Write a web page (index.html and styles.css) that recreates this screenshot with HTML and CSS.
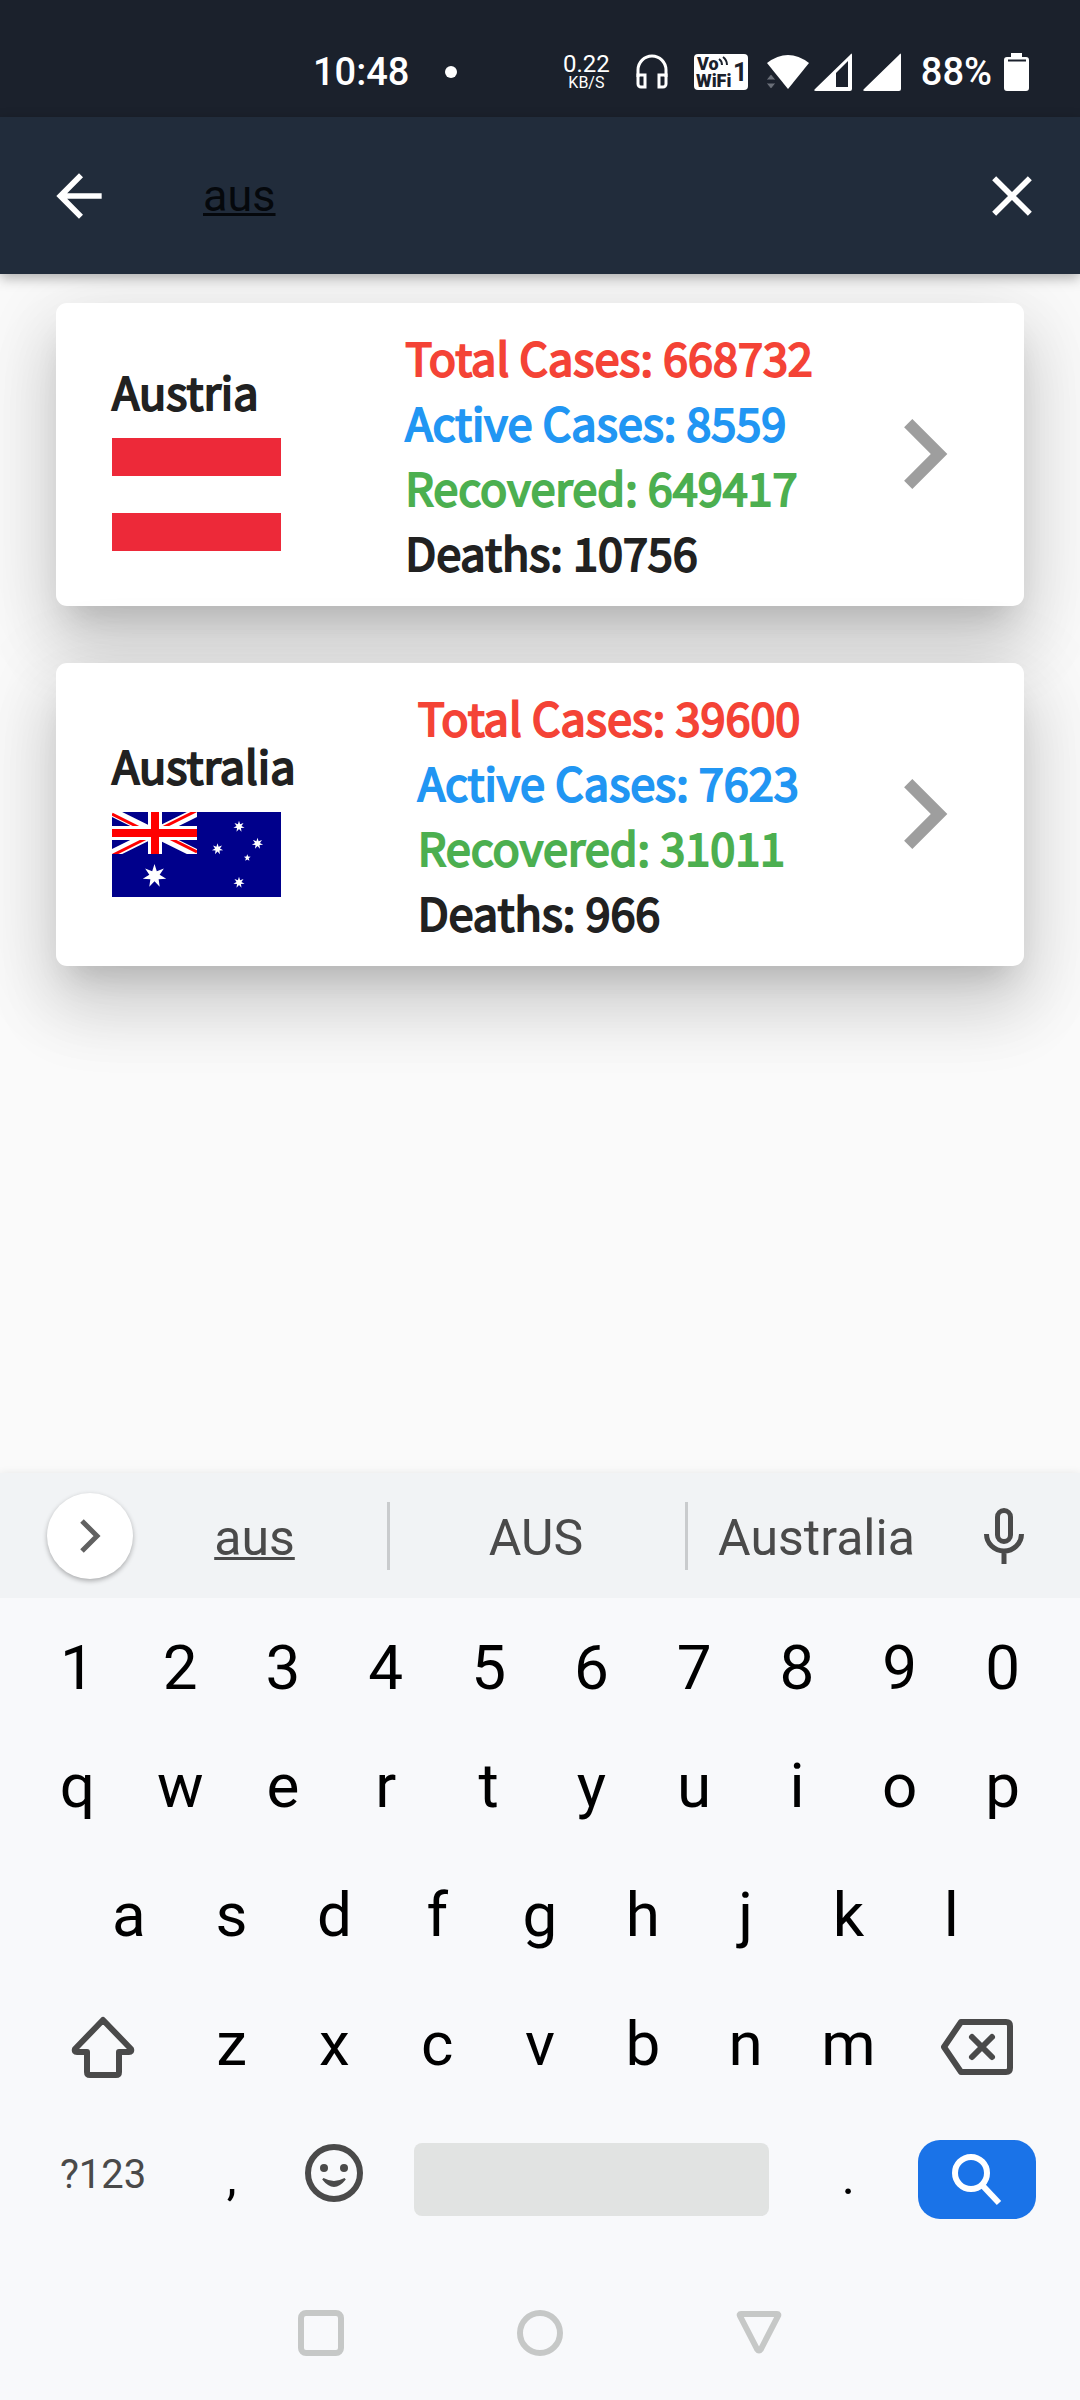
FILE: index.html
```html
<!DOCTYPE html>
<html lang="en">
<head>
<meta charset="utf-8">
<meta name="viewport" content="width=device-width, initial-scale=1">
<title>Country search</title>
<link rel="stylesheet" href="styles.css">
</head>
<body>
<div class="screen">
  <div class="status-bar">
    <div class="status-left">
      <span class="clock">10:48</span>
      <span class="notice-dot"></span>
    </div>
    <div class="status-right">
      <div class="net-speed"><span class="net-value">0.22</span><span class="net-unit">KB/S</span></div>
      <svg class="icon-headphones" viewBox="0 0 32 36" width="32" height="36" fill="none" stroke="#fff" stroke-width="3">
        <path d="M2 23V16a14 14 0 0 1 28 0v7"/>
        <path d="M2 21h7v12H5a3 3 0 0 1-3-3zM30 21h-7v12h4a3 3 0 0 0 3-3z"/>
      </svg>
      <svg class="icon-vowifi" viewBox="0 0 54 36" width="54" height="36">
        <rect width="54" height="36" rx="4" fill="#fff"/>
        <g fill="#1b212c" font-family="Roboto, sans-serif" font-weight="900">
          <text x="3" y="16" font-size="18">Vo</text>
          <text x="2" y="33" font-size="18">WiFi</text>
          <text x="39" y="27" font-size="25" font-weight="700">1</text>
        </g>
        <path d="M25 5q3 2 3 6M29 3q4 3 4 8" fill="none" stroke="#1b212c" stroke-width="2"/>
      </svg>
      <svg class="icon-radio" viewBox="0 0 134 38" width="134" height="38">
        <path d="M0 10Q21-6 42 10L21 36z" fill="#fff"/>
        <path d="M-1 27l5-6 5 6zM-1 30h10l-5 6z" fill="#6a6f78" stroke="#1b212c" stroke-width="1"/>
        <path d="M83 2Q85-1 85 2V36q0 2-2 2H49q-3 0-1-2z" fill="#fff"/>
        <path d="M81 8V34H69V20z" fill="#1b212c"/>
        <path d="M132 2Q134-1 134 2V36q0 2-2 2H98q-3 0-1-2z" fill="#fff"/>
      </svg>
      <span class="battery-level">88%</span>
      <svg class="icon-battery" viewBox="0 0 25 38" width="25" height="38">
        <path d="M7 0h11v4h4a3 3 0 0 1 3 3v28a3 3 0 0 1-3 3H3a3 3 0 0 1-3-3V7a3 3 0 0 1 3-3h4z" fill="#fff"/>
        <path d="M4 7.500h18" stroke="#1b212c" stroke-width="2"/>
      </svg>
    </div>
  </div>

  <header class="app-bar">
    <button class="icon-button" type="button" aria-label="Back">
      <svg viewBox="0 0 24 24" width="68" height="68" fill="#fff"><path d="M20 11H7.830l5.590-5.590L12 4l-8 8 8 8 1.410-1.410L7.830 13H20v-2z"/></svg>
    </button>
    <input class="search-input" type="text" value="aus" aria-label="Search country">
    <button class="icon-button" type="button" aria-label="Clear">
      <svg viewBox="0 0 24 24" width="68" height="68" fill="#fff"><path d="M19 6.410L17.590 5 12 10.590 6.410 5 5 6.410 10.590 12 5 17.590 6.410 19 12 13.410 17.590 19 19 17.590 13.410 12z"/></svg>
    </button>
  </header>

  <main class="results">
    <article class="card">
      <div class="country">
        <h2 class="country-name">Austria</h2>
        <svg class="flag" viewBox="0 0 169 113" width="169" height="113"><path d="M0 0h169v38H0zM0 75h169v38H0z" fill="#ed2939"/></svg>
      </div>
      <div class="stats">
        <p class="stat total">Total Cases: 668732</p>
        <p class="stat active">Active Cases: 8559</p>
        <p class="stat recovered">Recovered: 649417</p>
        <p class="stat">Deaths: 10756</p>
      </div>
      <button class="icon-button" type="button" aria-label="Open Austria">
        <svg viewBox="0 0 24 24" width="140" height="140" fill="#9e9e9e"><path d="M10 6L8.590 7.410 13.170 12l-4.580 4.590L10 18l6-6z"/></svg>
      </button>
    </article>

    <article class="card">
      <div class="country">
        <h2 class="country-name">Australia</h2>
        <svg class="flag" viewBox="0 0 169 85" width="169" height="85">
          <defs>
            <path id="star" d="M0-12L2.300-4.780 9.380-7.480 5.170-1.180 11.700 2.670 4.140 3.300 5.210 10.810 0 5.300-5.210 10.810-4.140 3.300-11.700 2.670-5.170-1.180-9.380-7.480-2.300-4.780z"/>
            <clipPath id="canton"><path d="M0 0h85v42H0z"/></clipPath>
          </defs>
          <path d="M0 0h169v85H0z" fill="#00008b"/>
          <g clip-path="url(#canton)">
            <path d="M0 0L85 42M85 0L0 42" stroke="#fff" stroke-width="9"/>
            <path d="M0 2L42 23M84-1L42 20M1 43L43 22M85 40L43 19" stroke="#f00" stroke-width="3"/>
            <path d="M0 21h85M43 0v42" stroke="#fff" stroke-width="14"/>
            <path d="M0 21h85M43 0v42" stroke="#f00" stroke-width="8"/>
          </g>
          <g fill="#fff">
            <use href="#star" transform="translate(42.500 64)"/>
            <use href="#star" transform="translate(127 14.500) scale(.48)"/>
            <use href="#star" transform="translate(145.500 31.500) scale(.48)"/>
            <use href="#star" transform="translate(105.500 37) scale(.48)"/>
            <use href="#star" transform="translate(127 70.500) scale(.48)"/>
            <path d="M135.300 42.200l.9 2.400 2.500.1-2 1.600.7 2.500-2.100-1.400-2.100 1.400.7-2.500-2-1.600 2.500-.1z"/>
          </g>
        </svg>
      </div>
      <div class="stats">
        <p class="stat total">Total Cases: 39600</p>
        <p class="stat active">Active Cases: 7623</p>
        <p class="stat recovered">Recovered: 31011</p>
        <p class="stat">Deaths: 966</p>
      </div>
      <button class="icon-button" type="button" aria-label="Open Australia">
        <svg viewBox="0 0 24 24" width="140" height="140" fill="#9e9e9e"><path d="M10 6L8.590 7.410 13.170 12l-4.580 4.590L10 18l6-6z"/></svg>
      </button>
    </article>
  </main>

  <section class="keyboard" aria-label="Keyboard">
    <div class="suggestions">
      <button class="expand" type="button" aria-label="More">
        <svg viewBox="0 0 22 34" width="22" height="34" fill="none" stroke="#616161" stroke-width="5"><path d="M3 2l15 15L3 32"/></svg>
      </button>
      <button class="suggestion typed" type="button">aus</button>
      <button class="suggestion" type="button">AUS</button>
      <button class="suggestion" type="button">Australia</button>
      <button class="icon-button" type="button" aria-label="Voice input">
        <svg viewBox="0 0 40 56" width="40" height="56" fill="none" stroke="#4a4a4a" stroke-width="5">
          <rect x="13.500" y="2.500" width="13" height="31" rx="6.500"/><path d="M2.500 26a17.500 17 0 0 0 35 0M20 43v13"/>
        </svg>
      </button>
    </div>

    <div class="keys">
      <div class="row numbers">
        <button class="key" type="button">1</button><button class="key" type="button">2</button><button class="key" type="button">3</button><button class="key" type="button">4</button><button class="key" type="button">5</button><button class="key" type="button">6</button><button class="key" type="button">7</button><button class="key" type="button">8</button><button class="key" type="button">9</button><button class="key" type="button">0</button>
      </div>
      <div class="row">
        <button class="key" type="button">q</button><button class="key" type="button">w</button><button class="key" type="button">e</button><button class="key" type="button">r</button><button class="key" type="button">t</button><button class="key" type="button">y</button><button class="key" type="button">u</button><button class="key" type="button">i</button><button class="key" type="button">o</button><button class="key" type="button">p</button>
      </div>
      <div class="row">
        <button class="key indent" type="button">a</button><button class="key" type="button">s</button><button class="key" type="button">d</button><button class="key" type="button">f</button><button class="key" type="button">g</button><button class="key" type="button">h</button><button class="key" type="button">j</button><button class="key" type="button">k</button><button class="key" type="button">l</button>
      </div>
      <div class="row">
        <button class="key wide modifier" type="button" aria-label="Shift">
          <svg viewBox="0 0 64 62" width="64" height="62" fill="none" stroke="#4a4a4a" stroke-width="6" stroke-linejoin="round"><path d="M32 4L4 33q-1 3 2 3h10v20q0 3 3 3h26q3 0 3-3V36h10q3 0 2-3z"/></svg>
        </button>
        <button class="key" type="button">z</button><button class="key" type="button">x</button><button class="key" type="button">c</button><button class="key" type="button">v</button><button class="key" type="button">b</button><button class="key" type="button">n</button><button class="key" type="button">m</button>
        <button class="key wide modifier" type="button" aria-label="Backspace">
          <svg viewBox="0 0 72 56" width="72" height="56" fill="none" stroke="#4a4a4a" stroke-width="6" stroke-linejoin="round"><path d="M20 3h45q4 0 4 4v42q0 4-4 4H20L3 28z"/><path d="M31 18l20 20M51 18L31 38" stroke-linecap="round"/></svg>
        </button>
      </div>
      <div class="row">
        <button class="key wide symbols" type="button">?123</button>
        <button class="key punctuation" type="button">,</button>
        <button class="key" type="button" aria-label="Emoji">
          <svg viewBox="0 0 58 58" width="58" height="58" fill="none" stroke="#4a4a4a" stroke-width="6">
            <circle cx="29" cy="29" r="26"/><path d="M18 35q11 14 22 0q-11 6-22 0z" fill="#4a4a4a" stroke-width="2"/><circle cx="19" cy="24" r="4" fill="#4a4a4a" stroke="none"/><circle cx="39" cy="24" r="4" fill="#4a4a4a" stroke="none"/>
          </svg>
        </button>
        <button class="key space" type="button" aria-label="Space"></button>
        <button class="key punctuation" type="button">.</button>
        <button class="key wide search" type="button" aria-label="Search">
          <svg viewBox="0 0 50 52" width="50" height="52" fill="none" stroke="#fff" stroke-width="6"><circle cx="19" cy="19" r="16"/><path d="M31 32L47 49"/></svg>
        </button>
      </div>
    </div>

    <nav class="system-nav" aria-label="System">
      <button class="icon-button" type="button" aria-label="Recent apps"><svg viewBox="0 0 46 46" width="46" height="46" fill="none" stroke="#c6c8c7" stroke-width="6"><rect x="3" y="3" width="40" height="40" rx="5"/></svg></button>
      <button class="icon-button" type="button" aria-label="Home"><svg viewBox="0 0 46 46" width="46" height="46" fill="none" stroke="#c6c8c7" stroke-width="6"><circle cx="23" cy="23" r="20"/></svg></button>
      <button class="icon-button" type="button" aria-label="Hide keyboard"><svg viewBox="0 0 46 46" width="46" height="46" fill="none" stroke="#c6c8c7" stroke-width="6" stroke-linejoin="round"><path d="M5 4h36q2 0 1 2L25 39q-2 3-4 0L4 6q-1-2 1-2z"/></svg></button>
    </nav>
  </section>
</div>
</body>
</html>
```

FILE: styles.css
```css
* {
  box-sizing: border-box;
}

body {
  margin: 0;
  background: #fafafa;
  font-family: Roboto, sans-serif;
}

h2,
p {
  margin: 0;
}

svg {
  display: block;
  flex: none;
}

button {
  margin: 0;
  padding: 0;
  border: 0;
  background: none;
  color: inherit;
  font: inherit;
}

.screen {
  display: flex;
  flex-direction: column;
  min-height: 100vh;
  overflow: hidden;
}

/* Status bar */
.status-bar {
  display: flex;
  align-items: center;
  justify-content: space-between;
  height: 117px;
  padding: 27px 51px 0 313px;
  background: #1b212c;
  color: #fff;
}

.status-left,
.status-right {
  display: flex;
  align-items: center;
}

.status-left {
  gap: 36px;
}

.clock,
.battery-level {
  font-size: 38px;
  font-weight: 500;
  line-height: 40px;
}

.notice-dot {
  width: 12px;
  height: 12px;
  border-radius: 50%;
  background: #fff;
}

.net-speed {
  display: flex;
  flex-direction: column;
  align-items: center;
  margin-right: 26px;
}

.net-value {
  font-size: 24px;
  line-height: 22px;
}

.net-unit {
  font-size: 16px;
  line-height: 16px;
}

.icon-headphones {
  margin-right: 26px;
}

.icon-vowifi {
  margin-right: 19px;
}

.icon-radio {
  margin-right: 20px;
}

.battery-level {
  margin-right: 12px;
}

/* App bar */
.app-bar {
  position: relative;
  z-index: 1;
  display: flex;
  align-items: center;
  height: 157px;
  padding: 0 34px 0 45px;
  background: #212c3b;
  box-shadow: 0 4px 12px rgba(0, 0, 0, .3);
}

.icon-button {
  display: flex;
  align-items: center;
  justify-content: center;
}

.search-input {
  flex: 1;
  min-width: 0;
  margin: 0 24px 0 90px;
  padding: 0;
  border: 0;
  outline: 0;
  background: none;
  color: #05080c;
  font: 45px/60px Roboto, sans-serif;
  text-decoration: underline;
  text-decoration-thickness: 3px;
  text-decoration-skip-ink: none;
}

/* Result cards */
.results {
  display: flex;
  flex: 1;
  flex-direction: column;
  gap: 57px;
  padding: 29px 56px 56px;
}

.card {
  display: grid;
  grid-template-columns: 252px 1fr 140px;
  align-items: center;
  padding: 21px 30px 22px 56px;
  border-radius: 11px;
  background: #fff;
  box-shadow:
    0 22px 30px -14px rgba(0, 0, 0, .15),
    0 44px 66px 6px rgba(0, 0, 0, .11),
    0 16px 82px 14px rgba(0, 0, 0, .09);
}

.country {
  display: flex;
  flex-direction: column;
  gap: 15px;
}

.country-name,
.stat {
  color: #212121;
  font: 400 45px/65px "Noto Sans CJK SC", sans-serif;
  white-space: nowrap;
  -webkit-text-stroke: 2px currentColor;
}

.stats {
  justify-self: center;
}

.total {
  color: #f44336;
}

.active {
  color: #2196f3;
}

.recovered {
  color: #4caf50;
}

/* Keyboard */
.keyboard {
  position: relative;
  background: #f8f9fb;
  box-shadow: 0 0 8px rgba(0, 0, 0, .08);
}

.suggestions {
  display: grid;
  grid-template-columns: 122px 265fr 298fr 263fr 112px;
  align-items: center;
  height: 125px;
  padding-right: 20px;
  background: #f1f3f5;
}

.expand {
  display: flex;
  align-items: center;
  justify-content: center;
  width: 86px;
  height: 86px;
  margin-left: 47px;
  border-radius: 50%;
  background: #fff;
  box-shadow: 0 2px 5px rgba(0, 0, 0, .3);
}

.suggestion {
  height: 68px;
  padding-top: 4px;
  color: #4a4a4a;
  font-size: 50px;
  line-height: 64px;
}

.suggestion + .suggestion {
  padding-right: 3px;
  border-left: 3px solid #c9cbcd;
}

.typed {
  text-decoration: underline;
  text-decoration-thickness: 3px;
}

.keys {
  padding: 15px 26px 0;
}

.row {
  display: grid;
  grid-template-columns: repeat(20, 1fr);
  height: 129px;
}

.numbers {
  height: 108px;
}

.key {
  display: flex;
  grid-column: span 2;
  align-items: center;
  justify-content: center;
  color: #000;
  font-size: 62px;
}

.indent {
  grid-column: 2 / span 2;
}

.wide {
  grid-column: span 3;
}

.modifier {
  padding-top: 6px;
}

.symbols {
  padding-top: 4px;
  color: #4a4a4a;
  font-size: 40px;
}

.punctuation {
  padding-top: 8px;
  font-size: 50px;
}

.space {
  grid-column: span 8;
  height: 73px;
  margin: 35px 28px 0;
  border-radius: 8px;
  background: #e1e3e2;
}

.search {
  height: 79px;
  margin: 32px 18px 0;
  border-radius: 22px;
  background: #1a73e8;
}

.system-nav {
  display: flex;
  justify-content: center;
  gap: 173px;
  padding: 73px 0 44px;
}
```
